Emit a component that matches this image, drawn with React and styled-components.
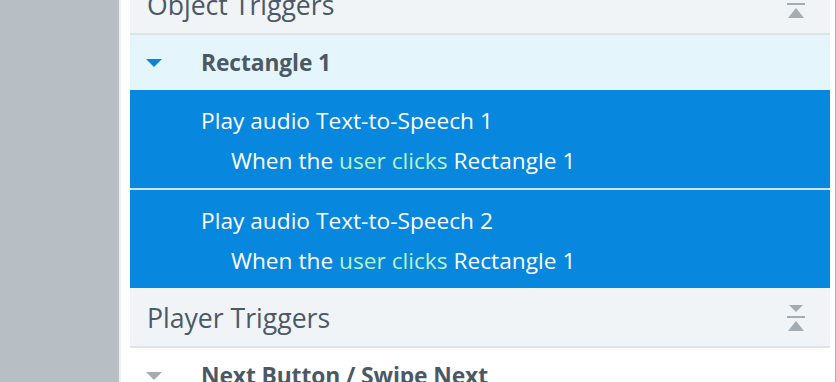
import React from "react";
import styled, { createGlobalStyle } from "styled-components";

const Global = createGlobalStyle`
  html, body { margin: 0; padding: 0; }
  body {
    width: 836px; height: 382px; overflow: hidden; background: #ffffff;
    font-family: "Open Sans", "Noto Sans", sans-serif;
  }
`;

const Page = styled.div`
  display: grid;
  grid-template-columns: 119px 2px 9px 700px 5px 1px;
  height: 382px;
  overflow: hidden;
`;

const SideBar = styled.div`background: #b7bfc4;`;
const SideEdge = styled.div`background: #eef1f3;`;
const Gutter = styled.div`background: #ffffff;`;
const EdgeLine = styled.div`background: #a9b1b6;`;

const Panel = styled.div`
  display: flex;
  flex-direction: column;
  margin-top: -25px;
  min-width: 0;
`;

const SectionHeader = styled.div`
  display: flex;
  align-items: center;
  justify-content: space-between;
  height: 56px;
  padding: 2px 24px 0 17px;
  background: #f0f4f7;
  border-bottom: 2px solid #dde3e8;
  color: #4b5966;
  font-size: 26.6px;
  line-height: 34px;
`;

const GroupRow = styled.div`
  display: flex;
  align-items: center;
  height: 55px;
  background: ${p => (p.$muted ? "#ffffff" : "#e4f5fc")};
  padding-left: 16px;
`;

const Caret = styled.span`
  width: 0; height: 0;
  border-left: 8px solid transparent;
  border-right: 8px solid transparent;
  border-top: 8px solid ${p => (p.$muted ? "#a3acb2" : "#0a84d6")};
  margin-right: 39px;
`;

const GroupTitle = styled.span`
  font-weight: 700;
  font-size: 22.8px;
  color: #4b5966;
  letter-spacing: -0.1px;
`;

const Trigger = styled.div`
  display: flex;
  flex-direction: column;
  justify-content: center;
  gap: 10px;
  height: 98px;
  padding-top: 3px;
  box-sizing: border-box;
  background: #0787dd;
  color: #ffffff;
  padding-left: 71px;
  font-size: 22.7px;
  & + & { border-top: 2px solid #cde6f6; height: 100px; }
`;

const Action = styled.div`line-height: 30px;`;
const Condition = styled.div`line-height: 30px; padding-left: 30px;`;
const Hi = styled.span`color: #b8f3c4;`;

const CollapseIcon = ({ top = true }) => (
  <svg width="20" height="27" viewBox="0 0 20 27">
    {top && <polygon points="3,0 17,0 10,7" fill="#a3acb2" />}
    <rect x="1" y="11" width="18" height="2" fill="#a3acb2" />
    <polygon points="2,26 18,26 10,16" fill="#a3acb2" />
  </svg>
);

const triggers = [
  { action: "Play audio Text-to-Speech 1" },
  { action: "Play audio Text-to-Speech 2" },
];

export default function App() {
  return (
    <>
      <Global />
      <Page>
        <SideBar />
        <SideEdge />
        <Gutter />
        <Panel>
          <SectionHeader>
            <span>Object Triggers</span>
            <CollapseIcon />
          </SectionHeader>
          <GroupRow>
            <Caret />
            <GroupTitle>Rectangle 1</GroupTitle>
          </GroupRow>
          {triggers.map(t => (
            <Trigger key={t.action}>
              <Action>{t.action}</Action>
              <Condition>
                When the <Hi>user clicks</Hi> Rectangle 1
              </Condition>
            </Trigger>
          ))}
          <SectionHeader>
            <span>Player Triggers</span>
            <CollapseIcon />
          </SectionHeader>
          <GroupRow $muted>
            <Caret $muted />
            <GroupTitle>Next Button / Swipe Next</GroupTitle>
          </GroupRow>
        </Panel>
        <Gutter />
        <EdgeLine />
      </Page>
    </>
  );
}
